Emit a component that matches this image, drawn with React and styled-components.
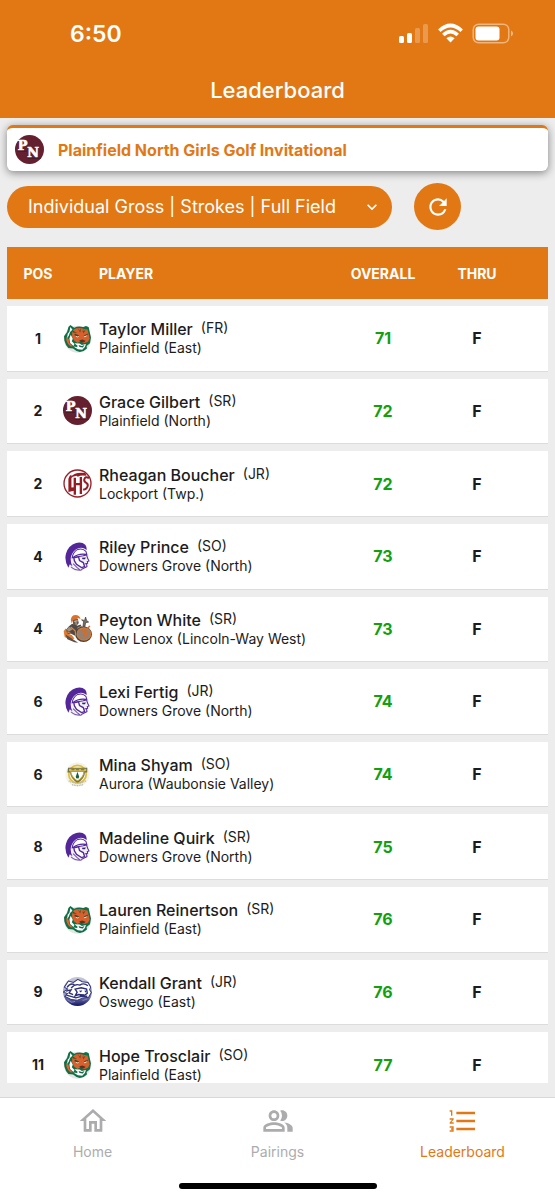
import React from "react";
import styled, { createGlobalStyle } from "styled-components";
import {
  MdOutlineHome,
  MdOutlinePeopleAlt,
  MdFormatListNumbered,
  MdRefresh,
  MdKeyboardArrowDown,
} from "react-icons/md";

const orange = "#e27814";

const players = [
  { pos: 1, name: "Taylor Miller", year: "FR", school: "Plainfield (East)", logo: "tiger", overall: 71 },
  { pos: 2, name: "Grace Gilbert", year: "SR", school: "Plainfield (North)", logo: "pn", overall: 72 },
  { pos: 2, name: "Rheagan Boucher", year: "JR", school: "Lockport (Twp.)", logo: "lths", overall: 72 },
  { pos: 4, name: "Riley Prince", year: "SO", school: "Downers Grove (North)", logo: "trojan", overall: 73 },
  { pos: 4, name: "Peyton White", year: "SR", school: "New Lenox (Lincoln-Way West)", logo: "warrior", overall: 73 },
  { pos: 6, name: "Lexi Fertig", year: "JR", school: "Downers Grove (North)", logo: "trojan", overall: 74 },
  { pos: 6, name: "Mina Shyam", year: "SO", school: "Aurora (Waubonsie Valley)", logo: "shield", overall: 74 },
  { pos: 8, name: "Madeline Quirk", year: "SR", school: "Downers Grove (North)", logo: "trojan", overall: 75 },
  { pos: 9, name: "Lauren Reinertson", year: "SR", school: "Plainfield (East)", logo: "tiger", overall: 76 },
  { pos: 9, name: "Kendall Grant", year: "JR", school: "Oswego (East)", logo: "wolf", overall: 76 },
  { pos: 11, name: "Hope Trosclair", year: "SO", school: "Plainfield (East)", logo: "tiger", overall: 77 },
];

const tabs = [
  { label: "Home", Icon: MdOutlineHome },
  { label: "Pairings", Icon: MdOutlinePeopleAlt },
  { label: "Leaderboard", Icon: MdFormatListNumbered, active: true },
];

function TigerLogo() {
  return (
    <>
      <circle cx="43" cy="45" r="40" fill="#e4e6e5" />
      <path d="M22 3 L33 11 Q46 5 60 9 L68 6 L76 9 L79 22 L83 40 L80 57 L70 65 L71 73 L61 80 L50 83 L40 80 L30 73 L16 71 L9 62 L4 49 L3 36 L12 24 L16 9 Z" fill="#0f7048" />
      <path d="M22 9 L28 17 L21 24 L17 35 L12 42 L14 29 L19 23 Z" fill="#fff" />
      <path d="M10 38 L10 48 L15 59 L22 66 L29 67 L19 56 L17 45 Z" fill="#e8602d" />
      <path d="M32 16 Q47 8 63 15 L73 16 L76 30 L79 43 L74 53 L62 57 L52 51 L43 56 L33 49 L27 38 L27 26 Z" fill="#d95f2c" />
      <path d="M23 32 L29 44 L26 51 L34 59 L31 65 L21 56 L19 43 Z" fill="#fff" />
      <path d="M38 33 L48 36 L44 40 L38 38 Z M62 35 L71 32 L69 38 L63 39 Z" fill="#f3d9b8" />
      <path d="M35 28 L48 34 L44 37 L34 33 Z M61 34 L75 28 L73 32 L64 36 Z M43 11 L50 20 L54 11 L51 25 Z M60 13 L58 24 L67 17 L60 28 Z M29 20 L42 26 L30 25 Z" fill="#3a4a2c" />
      <path d="M48 49 L57 46 L67 50 L63 54 L54 55 Z" fill="#5a3322" />
      <path d="M34 57 L49 58 L56 62 L68 59 L65 68 L57 76 L44 75 L31 67 L41 68 L44 65 Z" fill="#fff" />
      <path d="M46 62 L56 65 L64 62 L59 70 L49 68 Z" fill="#176647" />
    </>
  );
}

function PlainfieldNorthLogo() {
  return (
    <>
      <circle cx="43" cy="43" r="43" fill="#64202f" />
      <g fontFamily="'DejaVu Serif', serif" fontWeight="700" fill="#fff" stroke="#fff" strokeWidth="2">
        <text x="8" y="45" fontSize="38">P</text>
        <text x="36" y="66" fontSize="38">N</text>
      </g>
      <path d="M8 48 H36 M37 69 H77" stroke="#291d22" strokeWidth="2" />
    </>
  );
}

function LockportLogo() {
  return (
    <>
      <circle cx="43" cy="43" r="40" fill="#fff" stroke="#982129" strokeWidth="4" />
      <path d="M20 20 L25 17 V55 L36 54 V64 L16 68 V29 Z" fill="#941c25" />
      <path d="M22 24 Q37 7 66 12 L70 20 Q52 17 44 23 L40 20 Q27 22 22 28 Z" fill="#941c25" />
      <path d="M35 26 V76 M35 45 H54 M53 24 V74" fill="none" stroke="#941c25" strokeWidth="7" />
      <path d="M77 27 Q66 20 63 31 Q62 38 70 42 Q77 47 70 57 Q66 62 60 60" fill="none" stroke="#941c25" strokeWidth="6" />
    </>
  );
}

function TrojanLogo() {
  return (
    <>
      <circle cx="45" cy="52" r="34" fill="#f1f1f5" />
      {/* crest */}
      <path d="M16 76 Q3 56 9 34 Q16 10 39 3 Q56 -1 66 8 Q71 14 70 24 L63 19 Q50 14 38 22 Q25 32 23 48 Q22 62 28 72 L20 66 Z" fill="#53269a" />
      <path d="M27 47 Q30 29 44 22 Q58 17 68 28 L71 38 L60 41 L48 43 Z" fill="#fff" stroke="#53269a" strokeWidth="3" />
      <path d="M30 46 Q46 33 70 37" fill="none" stroke="#53269a" strokeWidth="4" />
      {/* cheek guard */}
      <path d="M32 47 L46 44 L49 55 L60 61 L64 73 L55 76 L40 66 L34 56 Z" fill="#fff" stroke="#53269a" strokeWidth="4" />
      {/* face */}
      <path d="M70 39 L73 48 L77 56 L72 58 L73 63 L70 65 L71 73 L61 78 L54 82" fill="none" stroke="#53269a" strokeWidth="3" />
      <path d="M56 47 L68 46 L65 51 L58 51 Z" fill="#3b2070" />
      <path d="M64 65 L71 64" stroke="#53269a" strokeWidth="3" />
      <path d="M24 74 Q34 84 52 84 L42 76 L30 64" fill="none" stroke="#7654ac" strokeWidth="3" />
    </>
  );
}

function WarriorLogo() {
  return (
    <>
      <path d="M23 17 Q25 3 37 3 Q49 3 52 15 L44 12 L42 18 L30 17 L26 28 Z" fill="#dc7229" />
      <path d="M29 17 L44 15 L47 27 L39 36 L30 31 Z" fill="#66584d" />
      <path d="M33 22 L44 20 M38 19 L39 32" stroke="#c1afa0" strokeWidth="3" />
      <path d="M17 37 L27 29 L42 35 L52 31 L58 42 L54 57 L37 65 L23 58 L10 66 L9 47 Z" fill="#4f4a45" />
      <path d="M18 38 L29 45 L17 53 L11 47 Z M43 40 L54 35 L51 48 L42 50 Z" fill="#a1907e" />
      <path d="M59 38 L61 23 L55 17 L64 19 L67 9 L70 19 L76 24 L67 26 L64 43 Z" fill="#756c63" stroke="#3e3833" strokeWidth="2" />
      <path d="M2 51 L8 42 L12 57 L26 62 L34 73 L22 77 L5 68 Z" fill="#e07a31" />
      <path d="M7 60 L24 71 L45 85 L34 84 L13 75 Z" fill="#5b5149" />
      <ellipse cx="61" cy="60" rx="25" ry="23" fill="#45413e" />
      <ellipse cx="62" cy="59" rx="20" ry="18" fill="#8a837c" stroke="#db742d" strokeWidth="4" />
      <path d="M55 71 V53 Q55 47 63 48 Q72 50 69 64 L62 71 M63 49 V64 M71 43 L80 36 M77 56 L85 54" fill="none" stroke="#d16d2d" strokeWidth="4" />
      <path d="M23 38 L36 50 L38 65 M12 53 L22 57" fill="none" stroke="#df8b4c" strokeWidth="3" />
    </>
  );
}

function ShieldLogo() {
  return (
    <>
      <circle cx="43" cy="43" r="36" fill="#f4f3ea" />
      <circle cx="43" cy="42" r="26" fill="none" stroke="#e1bd38" strokeWidth="5" />
      <path d="M15 23 H72 V37 H65 Q65 55 43 68 Q22 55 21 37 H13 Z" fill="#70724b" />
      <path d="M18 26 H69 V33 H18 Z" fill="#d9bc54" />
      <path d="M23 34 H62 Q62 51 43 62 Q24 51 23 34 Z" fill="#fff" stroke="#bfa131" strokeWidth="3" />
      <path d="M43 35 L48 50 L46 55 L39 54 L38 49 Z" fill="#176044" />
      <path d="M25 29 H34 M38 29 H48 M53 29 H63" stroke="#716b38" strokeWidth="3" />
      <path d="M17 62 Q29 68 43 69 Q56 69 69 61 M27 73 Q43 78 59 73" fill="none" stroke="#b9b7ab" strokeWidth="4" strokeDasharray="3 2" />
    </>
  );
}

function WolfLogo() {
  return (
    <>
      <defs>
        <linearGradient id="wolfFill" x1="0" y1="0" x2="0" y2="1">
          <stop offset="0" stopColor="#c6c7d5" />
          <stop offset="0.55" stopColor="#a2a6ca" />
          <stop offset="1" stopColor="#101263" />
        </linearGradient>
      </defs>
      <circle cx="43" cy="43" r="43" fill="url(#wolfFill)" />
      <path d="M4 30 L16 12 L31 16 L44 7 L57 14 L74 16 L82 30 L79 38 L84 46 L76 60 L59 62 L43 69 L25 67 L6 58 L13 49 L1 45 L14 36 Z" fill="#fff" stroke="#34367b" strokeWidth="3" />
      <path d="M12 31 Q22 16 34 23 M24 33 Q36 19 50 24 Q62 16 74 26 M9 42 L24 38 L18 47 L30 52 M10 54 L26 58 L38 62 L52 58 L72 57" fill="none" stroke="#303276" strokeWidth="4" />
      <path d="M36 36 L54 32 L70 36 L72 48 L64 54 L46 52 L36 56 L42 45 Z" fill="#fff" stroke="#292c77" strokeWidth="4" />
      <path d="M47 41 L57 40 L53 46 Z M63 41 L69 40 L68 47 Z M50 52 H62 V58 H50 Z" fill="#292c77" />
      <path d="M13 67 L25 75 L36 73 M58 70 L71 65" stroke="#7e83bd" strokeWidth="3" fill="none" />
    </>
  );
}

const logos = {
  tiger: TigerLogo,
  pn: PlainfieldNorthLogo,
  lths: LockportLogo,
  trojan: TrojanLogo,
  warrior: WarriorLogo,
  shield: ShieldLogo,
  wolf: WolfLogo,
};

function SchoolLogo({ name }) {
  const Drawing = logos[name];
  return (
    <Logo viewBox="0 0 86 86" aria-hidden="true">
      <Drawing />
    </Logo>
  );
}

function StatusIcons() {
  return (
    <StatusSvg viewBox="0 0 116 22" aria-hidden="true">
      <g fill="#fff">
        <rect x="0" y="13" width="5" height="7" rx="1.5" />
        <rect x="8" y="10" width="5" height="10" rx="1.5" />
        <rect x="16" y="5" width="5" height="15" rx="1.5" opacity="0.25" />
        <rect x="24" y="1" width="5" height="19" rx="1.5" opacity="0.25" />
      </g>
      <g fill="none" stroke="#fff" strokeWidth="3.6">
        <path d="M40.3 7.7 Q51.5 -2.7 62.7 7.7" />
        <path d="M44.3 12 Q51.5 5.3 58.7 12" />
      </g>
      <path d="M47.4 15.2 Q51.5 11.8 55.6 15.2 L51.5 19.5 Z" fill="#fff" />
      <rect x="74.2" y="1.2" width="35.6" height="18.6" rx="5.5" fill="none" stroke="#fff" strokeOpacity="0.45" strokeWidth="1.5" />
      <rect x="76.5" y="3.5" width="24" height="14" rx="3" fill="#fff" />
      <path d="M112 7.5 Q114 8.5 114 10.5 Q114 12.5 112 13.5 Z" fill="#fff" opacity="0.5" />
    </StatusSvg>
  );
}

function App() {
  return (
    <Page>
      <GlobalStyle />
      <Header>
        <StatusBar>
          <Time>6:50</Time>
          <StatusIcons />
        </StatusBar>
        <Title>Leaderboard</Title>
      </Header>
      <Main>
        <EventCard>
          <SchoolLogo name="pn" />
          <EventName>Plainfield North Girls Golf Invitational</EventName>
        </EventCard>
        <Controls>
          <SelectWrap>
            <Select aria-label="Leaderboard view">
              <option>Individual Gross | Strokes | Full Field</option>
            </Select>
            <MdKeyboardArrowDown />
          </SelectWrap>
          <RefreshButton type="button" aria-label="Refresh">
            <MdRefresh />
          </RefreshButton>
        </Controls>
        <TableArea>
          <Table>
            <thead>
              <tr>
                <PosHead scope="col">POS</PosHead>
                <PlayerHead scope="col">PLAYER</PlayerHead>
                <OverallHead scope="col">OVERALL</OverallHead>
                <ThruHead scope="col">THRU</ThruHead>
              </tr>
            </thead>
            <tbody>
              {players.map((p) => (
                <tr key={p.name}>
                  <Pos>{p.pos}</Pos>
                  <Cell>
                    <Player>
                      <SchoolLogo name={p.logo} />
                      <div>
                        <NameLine>
                          <Name>{p.name}</Name>
                          <Year>({p.year})</Year>
                        </NameLine>
                        <School>{p.school}</School>
                      </div>
                    </Player>
                  </Cell>
                  <Overall>{p.overall}</Overall>
                  <Thru>F</Thru>
                </tr>
              ))}
            </tbody>
          </Table>
        </TableArea>
      </Main>
      <Footer>
        <TabBar>
          {tabs.map(({ label, Icon, active }) => (
            <Tab key={label} href={"#" + label.toLowerCase()} $active={active}>
              <Icon />
              {label}
            </Tab>
          ))}
        </TabBar>
        <HomeIndicator />
      </Footer>
    </Page>
  );
}

const GlobalStyle = createGlobalStyle`
  * {
    box-sizing: border-box;
  }

  body {
    margin: 0;
    font-family: Inter, "Liberation Sans", sans-serif;
    color: #1c1c20;
  }
`;

const Page = styled.div`
  display: flex;
  flex-direction: column;
  height: 100vh;
  background: #ededed;
`;

const Header = styled.header`
  padding-bottom: 12px;
  background: ${orange};
  color: white;
`;

const StatusBar = styled.div`
  display: flex;
  justify-content: space-between;
  align-items: center;
  padding: 18px 40px 24px 70px;
`;

const Time = styled.span`
  font-size: 23px;
  font-weight: 600;
  line-height: 32px;
`;

const StatusSvg = styled.svg`
  width: 116px;
  height: 22px;
`;

const Title = styled.h1`
  margin: 0;
  font-size: 22px;
  font-weight: 500;
  line-height: 32px;
  text-align: center;
`;

const Main = styled.main`
  flex: 1;
  min-height: 0;
  display: flex;
  flex-direction: column;
  padding: 7px 7px 14px;
`;

const EventCard = styled.section`
  display: flex;
  align-items: center;
  gap: 14px;
  height: 46px;
  padding: 0 8px;
  background: white;
  border-top: 3px solid ${orange};
  border-radius: 6px;
  box-shadow: 0 2px 8px rgba(0, 0, 0, 0.45);
`;

const EventName = styled.h2`
  margin: 0;
  font-size: 16px;
  font-weight: 700;
  color: ${orange};
`;

const Controls = styled.div`
  display: flex;
  align-items: center;
  gap: 22px;
  padding: 12px 0 10px;
`;

const SelectWrap = styled.div`
  position: relative;
  flex: 0 1 385px;
  color: white;

  svg {
    position: absolute;
    top: 11px;
    right: 10px;
    width: 20px;
    height: 20px;
    pointer-events: none;
  }
`;

const Select = styled.select`
  appearance: none;
  width: 100%;
  height: 42px;
  padding: 0 36px 0 21px;
  border: 0;
  border-radius: 21px;
  background: ${orange};
  color: white;
  font-family: inherit;
  font-size: 18px;
`;

const RefreshButton = styled.button`
  display: flex;
  align-items: center;
  justify-content: center;
  width: 47px;
  height: 47px;
  padding: 0;
  border: 0;
  border-radius: 50%;
  background: ${orange};
  color: white;

  svg {
    width: 26px;
    height: 26px;
  }
`;

const TableArea = styled.div`
  flex: 1;
  min-height: 0;
  overflow: hidden;
`;

/* runs a little past the visible area so the last row is cut off */
const Table = styled.table`
  width: 100%;
  height: calc(100% + 22px);
  table-layout: fixed;
  border-collapse: separate;
  border-spacing: 0 7px;
`;

const HeadCell = styled.th`
  height: 52px;
  padding: 0;
  background: ${orange};
  color: white;
  font-size: 14px;
  font-weight: 700;
`;

const PosHead = styled(HeadCell)`
  width: 56px;
  padding-left: 6px;
`;

const PlayerHead = styled(HeadCell)`
  padding-left: 36px;
  text-align: left;
`;

const OverallHead = styled(HeadCell)`
  width: 94px;
`;

const ThruHead = styled(HeadCell)`
  width: 118px;
  padding-right: 24px;
`;

const Cell = styled.td`
  padding: 0;
  background: white;
  border-bottom: 1px solid #dcdcdc;
`;

const Pos = styled(Cell)`
  padding-left: 6px;
  font-size: 14px;
  font-weight: 700;
  text-align: center;
`;

const Overall = styled(Cell)`
  color: #10a010;
  font-size: 16px;
  font-weight: 700;
  text-align: center;
`;

const Thru = styled(Cell)`
  padding-right: 24px;
  font-size: 16px;
  font-weight: 700;
  text-align: center;
`;

const Player = styled.div`
  display: flex;
  align-items: center;
  gap: 7px;
`;

const Logo = styled.svg`
  flex: none;
  width: 29px;
  height: 29px;
`;

const NameLine = styled.div`
  display: flex;
  gap: 8px;
`;

const Name = styled.span`
  font-size: 16px;
  font-weight: 500;
  line-height: 20px;
`;

const Year = styled.span`
  font-size: 14px;
  line-height: 18px;
`;

const School = styled.div`
  font-size: 14px;
  line-height: 18px;
`;

const Footer = styled.footer`
  padding: 7px 0 11px;
  background: white;
  border-top: 1px solid #d8d8d8;
`;

const TabBar = styled.nav`
  display: flex;
  padding-bottom: 22px;
`;

const Tab = styled.a`
  flex: 1;
  display: flex;
  flex-direction: column;
  align-items: center;
  gap: 6px;
  color: ${(props) => (props.$active ? orange : "#acacae")};
  font-size: 14px;
  line-height: 18px;
  text-decoration: none;

  svg {
    width: 32px;
    height: 32px;
  }
`;

const HomeIndicator = styled.div`
  width: 198px;
  height: 6px;
  margin: 0 auto;
  border-radius: 3px;
  background: black;
`;

export default App;
